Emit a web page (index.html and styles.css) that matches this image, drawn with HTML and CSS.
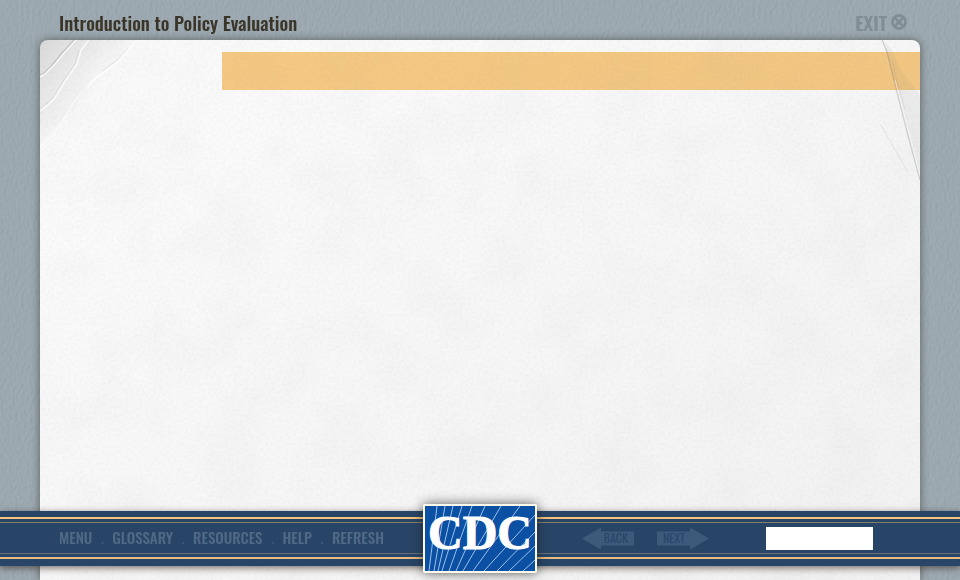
FILE: index.html
```html
<!DOCTYPE html>
<html lang="en">
<head>
<meta charset="utf-8">
<meta name="viewport" content="width=device-width, initial-scale=1">
<title>Introduction to Policy Evaluation</title>
<link rel="stylesheet" href="styles.css">
</head>
<body>
<svg class="texture wall" aria-hidden="true">
  <filter id="wall-grain" x="0" y="0" width="100%" height="100%">
    <feTurbulence type="fractalNoise" baseFrequency="0.35 0.22" numOctaves="3" seed="4" result="n"/>
    <feDiffuseLighting in="n" surfaceScale="1.1" diffuseConstant=".68" lighting-color="#fff">
      <feDistantLight azimuth="200" elevation="50"/>
    </feDiffuseLighting>
  </filter>
  <rect width="100%" height="100%" filter="url(#wall-grain)"/>
</svg>

<header class="top">
  <h1>Introduction to Policy Evaluation</h1>
  <button class="exit" type="button">EXIT
    <svg viewBox="0 0 16 16" width="16" height="16" aria-hidden="true">
      <circle cx="8" cy="8" r="6.6"/><path d="M4.2 4.2l7.6 7.6M11.8 4.2l-7.6 7.6"/>
    </svg>
  </button>
</header>

<main class="paper">
  <div class="banner"></div>
  <svg class="texture grain" aria-hidden="true">
    <filter id="paper-cloud" x="0" y="0" width="100%" height="100%">
      <feTurbulence type="fractalNoise" baseFrequency="0.018" numOctaves="6" seed="9"/>
      <feColorMatrix values="0 0 0 0 .35  0 0 0 0 .35  0 0 0 0 .35  .5 0 0 0 -.2"/>
    </filter>
    <filter id="paper-grain" x="0" y="0" width="100%" height="100%">
      <feTurbulence type="fractalNoise" baseFrequency="0.35" numOctaves="4" seed="2"/>
      <feColorMatrix values="0 0 0 0 .3  0 0 0 0 .3  0 0 0 0 .3  .35 0 0 0 -.14"/>
    </filter>
    <linearGradient id="paper-shade" x1="0" y1="0" x2="1" y2="1">
      <stop offset=".2" stop-color="#555" stop-opacity="0"/><stop offset="1" stop-color="#555" stop-opacity=".05"/>
    </linearGradient>
    <rect width="100%" height="100%" filter="url(#paper-cloud)" opacity=".2"/>
    <rect width="100%" height="100%" filter="url(#paper-grain)" opacity=".4"/>
    <rect width="100%" height="100%" fill="url(#paper-shade)"/>
  </svg>
  <svg class="crease crease-left" viewBox="0 0 110 120" width="110" height="120" aria-hidden="true">
    <defs>
      <linearGradient id="fold" x1="0" y1="0" x2=".55" y2=".5">
        <stop offset="0" stop-color="#888" stop-opacity=".3"/><stop offset="1" stop-color="#888" stop-opacity="0"/>
      </linearGradient>
    </defs>
    <path d="M0 0H100L55 50 28 75 0 107Z" fill="url(#fold)"/>
    <path class="light" d="M36 0L24 13 15 24 5 34 0 37M49 0L41 10 37 24 24 43 15 58 8 65 0 71M97 0L90 8 78 22 64 32 52 41 47 49"/>
    <path class="light thin" d="M40 54L32 65 22 82 13 94 0 107"/>
    <path class="dark" d="M34 0L22 13 13 24 4 33 0 35"/>
    <path class="dark thin" d="M39 10L35 24 22 43 13 57 6 64 0 69M88 8L76 21 62 31"/>
  </svg>
  <svg class="crease crease-right" viewBox="0 0 60 150" width="60" height="150" aria-hidden="true">
    <path d="M22 0L28 16 34 40 44 76 60 138V55L42 32 31 8Z" fill="#777" opacity=".08"/>
    <path class="dark" d="M22 0L27 12 32 32 37 52 43 76 51 107 60 140"/>
    <path class="light faint" d="M35 40L43 70 52 104 60 136"/>
    <path class="dark thin" d="M32 20L38 45 45 69M20 84L33 106 48 132"/>
  </svg>
</main>

<footer class="bar">
  <nav class="links" aria-label="Course">
    <a href="#menu">MENU</a><i>.</i><a href="#glossary">GLOSSARY</a><i>.</i><a href="#resources">RESOURCES</a><i>.</i><a href="#help">HELP</a><i>.</i><a href="#refresh">REFRESH</a>
  </nav>
  <svg class="logo" viewBox="0 0 110 65" role="img" aria-label="CDC">
    <rect width="110" height="65" fill="#0c50a4"/>
    <g stroke="#9cc0e8" fill="none">
      <path d="M12 0L4 65M20 0L9 65M28 0L13 65M37 0L17 65M47 0L24 65M60 0L31 65M76 0L38 65M95 0L48 65M110 9L59 65M110 26L72 65M110 40L84 65M110 54L98 65"/>
    </g>
    <text x="55" y="43" text-anchor="middle">CDC</text>
  </svg>
  <div class="controls">
    <button class="arrow back" type="button"><span>BACK</span></button>
    <button class="arrow next" type="button"><span>NEXT</span></button>
    <input class="page" type="text" aria-label="Page">
  </div>
</footer>
</body>
</html>
```

FILE: styles.css
```css
* { box-sizing: border-box; }

body {
  margin: 0;
  min-height: 100vh;
  display: flex;
  flex-direction: column;
  background: #929fa8;
  font-family: "Oswald", "Liberation Sans Narrow", "Liberation Sans", sans-serif;
}

button { font: inherit; border: 0; padding: 0; background: none; cursor: pointer; }

.texture {
  position: absolute;
  inset: 0;
  width: 100%;
  height: 100%;
  pointer-events: none;
}
.wall { z-index: -1; mix-blend-mode: soft-light; opacity: .45; }

.top {
  height: 40px;
  padding: 3px 53px 0 59px;
  display: flex;
  align-items: center;
  justify-content: space-between;
}
.top h1 { margin: 0; font-size: 19px; font-weight: 500; line-height: 24px; color: #3b3529; white-space: nowrap; }

.exit { display: flex; align-items: center; gap: 4px; font-size: 19px; font-weight: 600; line-height: 24px; color: #7f8d95; }
.exit svg { fill: none; stroke: currentColor; stroke-width: 2.7; }

.paper {
  position: relative;
  flex: 1;
  margin: 0 40px;
  padding-top: 12px;
  overflow: hidden;
  border-radius: 8px 8px 0 0;
  background: #fafafa;
  box-shadow: 0 0 9px rgba(50, 55, 45, .65);
}

.banner { height: 38px; margin-left: 182px; background: #f5c983; }

.crease { position: absolute; top: 0; fill: none; }
.crease-left { left: 0; }
.crease-right { right: 0; }
.light { stroke: #fff; stroke-width: 1.6; stroke-opacity: .75; fill: none; }
.dark { stroke: #777; stroke-width: 1.2; stroke-opacity: .3; fill: none; }
.thin { stroke-width: 1; stroke-opacity: .15; }
.light.thin { stroke-opacity: .8; }
.faint { stroke-width: 1; stroke-opacity: .5; }

.bar {
  position: fixed;
  left: 0;
  right: 0;
  bottom: 14px;
  height: 55px;
  display: grid;
  grid-template-columns: 1fr 114px 1fr;
  grid-template-rows: 55px;
  align-items: center;
  background: linear-gradient(
    #284567 6px, #f3c67c 6px 8px, #284567 8px 11px, #84806b 11px 12px,
    #284567 12px 42px, #6c7179 42px 43px, #284567 43px 46px, #e9bd80 46px 48px, #284567 48px);
  box-shadow: 0 2px 7px rgba(50, 40, 30, .65);
}

.links { display: flex; justify-content: space-between; padding: 0 39px 4px 59px; font-size: 15px; font-weight: 500; line-height: 20px; }
.links a { color: #506987; text-decoration: none; }
.links i { font-style: normal; color: #3c587a; }

.logo {
  width: 114px;
  height: 69px;
  border: 2px solid #fdf8ec;
  border-radius: 2px;
  box-shadow: 0 0 12px rgba(30, 30, 30, .7);
}
.logo text { font: 700 48px "Liberation Serif", serif; fill: #fff; stroke: #fff; stroke-width: 1; }

.controls { display: flex; align-items: center; padding: 0 87px 0 45px; }

.arrow {
  width: 52px;
  height: 22px;
  display: flex;
  align-items: center;
  background: #3d5a7b;
  font-size: 12px;
  line-height: 16px;
  color: #28466a;
}
.back { justify-content: flex-end; padding: 0 6px 2px 0; clip-path: polygon(0 50%, 19px 0, 19px 4px, 100% 4px, 100% 18px, 19px 18px, 19px 100%); }
.next { margin-left: 23px; padding: 0 0 2px 6px; clip-path: polygon(100% 50%, 33px 0, 33px 4px, 0 4px, 0 18px, 33px 18px, 33px 100%); }

.page { width: 107px; height: 23px; margin-left: auto; border: 0; padding: 0 4px; background: #fff; font: inherit; font-size: 14px; }
```
